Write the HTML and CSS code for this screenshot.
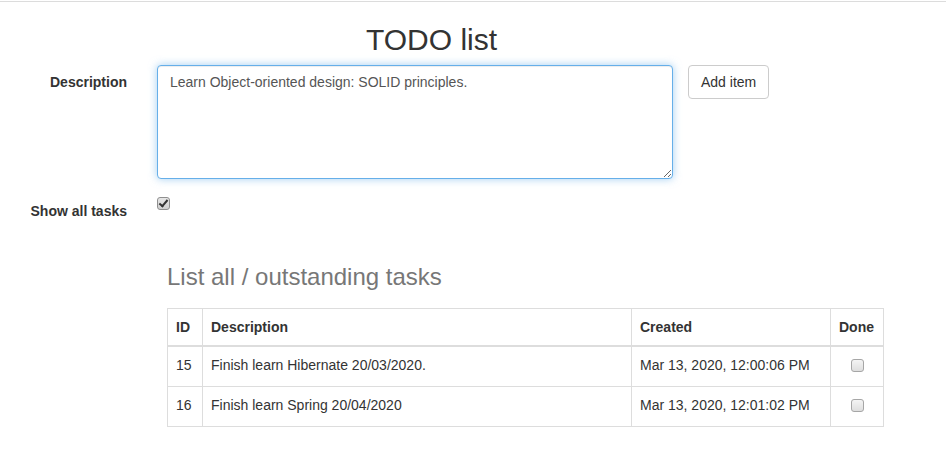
FILE: index.html
```html
<!DOCTYPE html>
<html lang="en">
<head>
<meta charset="utf-8">
<title>TODO list</title>
<link rel="stylesheet" href="styles.css">
</head>
<body>
<div class="topline"></div>
<h1 class="page-title">TODO list</h1>
<form class="todo-form">
  <div class="form-row">
    <label class="control-label" for="desc">Description</label>
    <textarea id="desc" class="form-control" rows="5">Learn Object-oriented design: SOLID principles.</textarea>
    <button type="button" class="btn">Add item</button>
  </div>
  <div class="form-row form-row-check">
    <label class="control-label" for="showall">Show all tasks</label>
    <input id="showall" class="cb cb-top" type="checkbox" checked>
  </div>
</form>
<section class="tasks">
  <h3 class="tasks-title">List all / outstanding tasks</h3>
  <table class="table">
    <colgroup>
      <col class="c-id"><col class="c-desc"><col class="c-created"><col class="c-done">
    </colgroup>
    <thead>
      <tr><th>ID</th><th>Description</th><th>Created</th><th>Done</th></tr>
    </thead>
    <tbody>
      <tr><td>15</td><td>Finish learn Hibernate 20/03/2020.</td><td>Mar 13, 2020, 12:00:06 PM</td><td class="done"><input class="cb" type="checkbox"></td></tr>
      <tr><td>16</td><td>Finish learn Spring 20/04/2020</td><td>Mar 13, 2020, 12:01:02 PM</td><td class="done"><input class="cb" type="checkbox"></td></tr>
    </tbody>
  </table>
</section>
</body>
</html>
```
FILE: styles.css
```css
* { box-sizing: border-box; }
html, body { margin: 0; padding: 0; background: #fff; }
body {
  font-family: "Liberation Sans", Arial, sans-serif;
  font-size: 14px;
  line-height: 20px;
  color: #333;
}
.topline {
  margin-top: 1px;
  height: 1px;
  background: #dcdcdc;
}
.page-title {
  width: 863px;
  margin: 21px 0 9px;
  font-size: 30px;
  line-height: 33px;
  font-weight: 500;
  text-align: center;
  color: #333;
}
.todo-form { margin: 0; }
.form-row {
  display: flex;
  align-items: flex-start;
}
.form-row-check { margin-top: 15px; }
.control-label {
  width: 127px;
  margin-right: 30px;
  padding-top: 7px;
  text-align: right;
  font-weight: bold;
  line-height: 20px;
}
.form-control {
  display: block;
  width: 516px;
  height: 114px;
  padding: 6px 12px;
  font-family: "Liberation Sans", Arial, sans-serif;
  font-size: 14px;
  line-height: 20px;
  color: #555;
  background: #fff;
  border: 1px solid #66afe9;
  border-radius: 4px;
  box-shadow: inset 0 1px 1px rgba(0,0,0,.075), 0 0 8px rgba(102,175,233,.6);
  outline: 0;
  margin: 0;
}
.btn {
  margin: 0 0 0 15px;
  padding: 6px 12px;
  height: 34px;
  font-family: "Liberation Sans", Arial, sans-serif;
  font-size: 14px;
  line-height: 20px;
  color: #333;
  background: #fff;
  border: 1px solid #ccc;
  border-radius: 4px;
}
.cb {
  -webkit-appearance: none;
  appearance: none;
  position: relative;
  display: block;
  width: 13px;
  height: 13px;
  margin: 0;
  border: 1px solid #a6a6a6;
  border-radius: 3px;
  background: linear-gradient(#f4f4f4, #dedede);
}
.cb-top { margin-top: 3px; }
.cb:checked {
  border-color: #8f8f8f;
  background: linear-gradient(#e6e6e6, #cfcfcf);
}
.cb:checked::after {
  content: "";
  position: absolute;
  left: 3px;
  top: 0px;
  width: 3px;
  height: 7px;
  border: solid #333;
  border-width: 0 2px 2px 0;
  transform: rotate(40deg);
}
.tasks {
  padding-left: 167px;
  margin-top: 43px;
}
.tasks-title {
  margin: 0 0 18px;
  font-size: 24px;
  line-height: 26px;
  font-weight: 500;
  color: #777;
}
.table {
  width: 716px;
  table-layout: fixed;
  border-collapse: collapse;
}
.c-id { width: 35px; }
.c-desc { width: 429px; }
.c-created { width: 199px; }
.c-done { width: 53px; }
.table th, .table td {
  border: 1px solid #ddd;
  text-align: left;
  vertical-align: top;
  line-height: 20px;
  white-space: nowrap;
}
.table th {
  padding: 8px;
  font-weight: bold;
  border-bottom-width: 2px;
}
.table td {
  padding: 8px 8px 11px;
}
.table td.done { padding-top: 12px; }
.table td.done .cb { margin: 0 auto; }
```
